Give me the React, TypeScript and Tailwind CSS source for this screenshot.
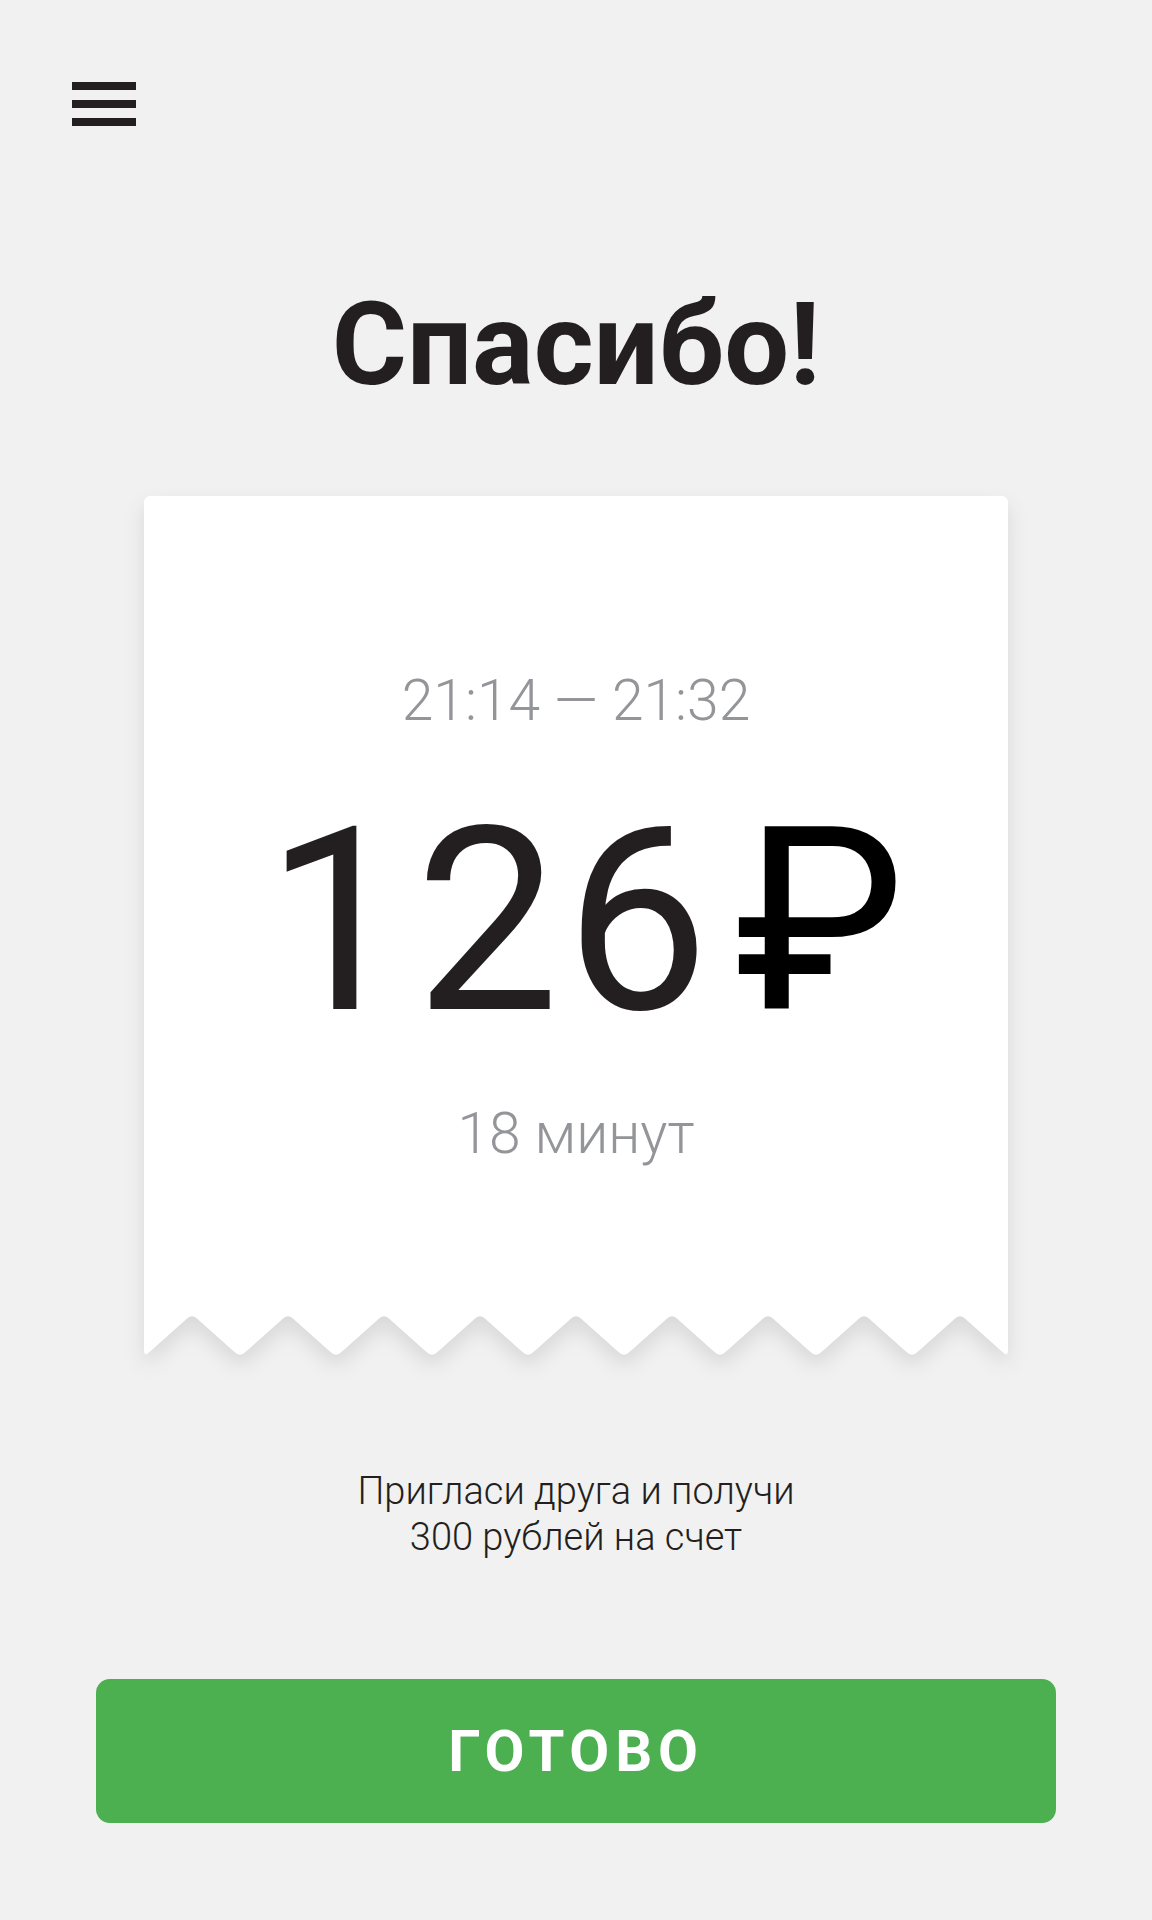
import React from 'react';

// зигзаг внизу чека: точки + скругление углов
const W = 864;
const STEP = 96;
const DEPTH = 44;

function zigzagPath(r: number) {
  const pts: [number, number][] = [[W, -1], [W, DEPTH]];
  for (let x = W - STEP / 2; x > 0; x -= STEP) {
    pts.push([x, 1]);
    pts.push([x - STEP / 2, DEPTH]);
  }
  pts.push([0, -1]);

  let d = `M${pts[0][0]},${pts[0][1]}`;
  for (let i = 1; i < pts.length - 1; i++) {
    const [px, py] = pts[i];
    const [ax, ay] = pts[i - 1];
    const [bx, by] = pts[i + 1];
    const la = Math.hypot(ax - px, ay - py);
    const lb = Math.hypot(bx - px, by - py);
    const p1 = [px + ((ax - px) * r) / la, py + ((ay - py) * r) / la];
    const p2 = [px + ((bx - px) * r) / lb, py + ((by - py) * r) / lb];
    d += ` L${p1[0]},${p1[1]} Q${px},${py} ${p2[0]},${p2[1]}`;
  }
  d += ` L${pts[pts.length - 1][0]},${pts[pts.length - 1][1]} Z`;
  return d;
}

const Receipt: React.FC = () => (
  <div className="w-[864px] drop-shadow-[0_10px_10px_rgba(0,0,0,0.1)]">
    <div className="bg-white rounded-t-[6px] pt-[176px] pb-[152px] flex flex-col items-center">
      <p className="text-[57px] leading-none font-light text-[#939598]">21:14 — 21:32</p>
      <p className="mt-[65px] pl-[18px] text-[256px] leading-none text-[#231f20] flex items-baseline">
        <span className="tracking-[6px]">126</span>
        <span className="ml-[20px] text-black">₽</span>
      </p>
      <p className="mt-[55px] text-[57px] leading-none font-light text-[#939598]">18 минут</p>
    </div>
    <svg width={W} height={DEPTH + 2} viewBox={`0 0 ${W} ${DEPTH + 2}`} className="block -mt-px">
      <path d={zigzagPath(7)} fill="#ffffff" />
    </svg>
  </div>
);

export default function App() {
  return (
    <div className="min-h-[1920px] w-[1152px] bg-[#f1f1f1] font-[family-name:Roboto,sans-serif] flex flex-col">
      {/* меню */}
      <div className="pt-[82px] pl-[72px] flex flex-col gap-[10px]">
        <div className="w-[64px] h-[8px] bg-[#231f20]" />
        <div className="w-[64px] h-[8px] bg-[#231f20]" />
        <div className="w-[64px] h-[8px] bg-[#231f20]" />
      </div>

      <h1 className="mt-[161px] text-center text-[115px] leading-none font-bold text-[#231f20]">
        Спасибо!
      </h1>

      <div className="mt-[94px] flex justify-center">
        <Receipt />
      </div>

      <p className="mt-[109px] text-center text-[38px] leading-[46px] font-light text-[#231f20]">
        Пригласи друга и получи
        <br />
        300 рублей на счет
      </p>

      <div className="mt-[119px] flex justify-center">
        <button className="w-[960px] h-[144px] rounded-[14px] bg-[#4caf50] text-white text-[58px] font-bold tracking-[0.1em] leading-none">
          ГОТОВО
        </button>
      </div>
    </div>
  );
}
